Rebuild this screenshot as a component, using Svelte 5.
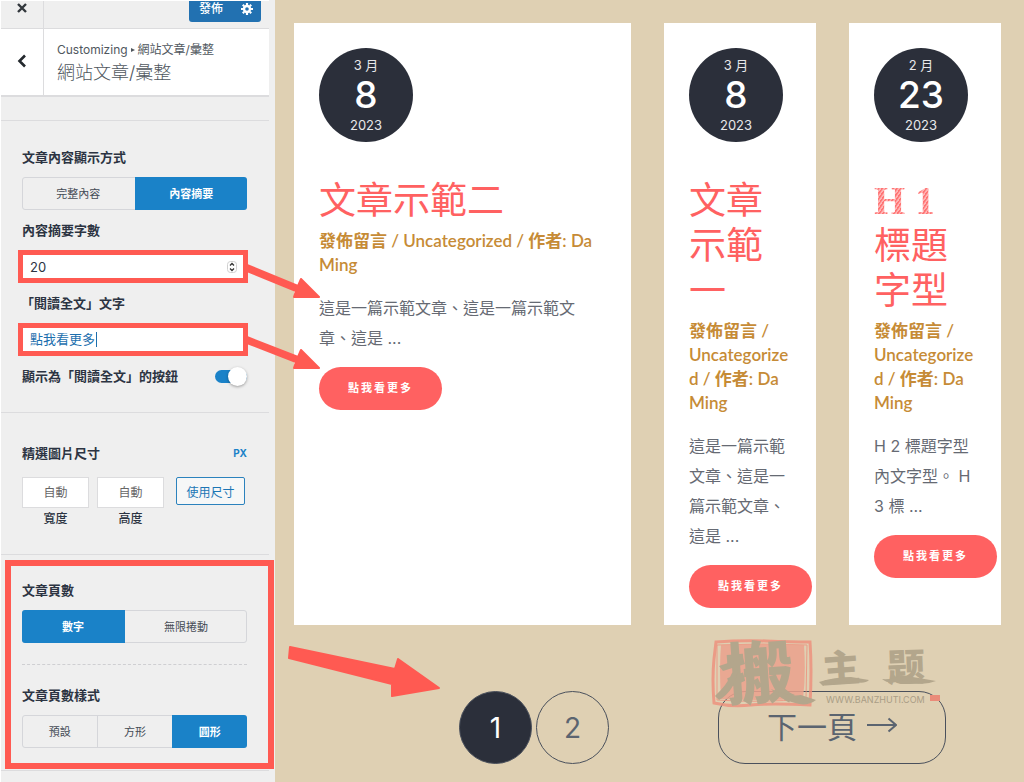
<script>
  let display = $state("內容摘要");
  let paging = $state("數字");
  let shape = $state("圓形");
  let words = $state(20);
  let more = $state("點我看更多");
  let asButton = $state(true);
  let page = $state(1);

  const posts = [
    { month: "3 月", day: "8", title: "文章示範二", wide: true, text: "這是一篇示範文章、這是一篇示範文章、這是 ..." },
    { month: "3 月", day: "8", title: "文章示範一", text: "這是一篇示範文章、這是一篇示範文章、這是 ..." },
    { month: "2 月", day: "23", sketch: "H 1", title: "標題字型", text: "H 2 標題字型內文字型。 H 3 標 ..." },
  ];
</script>

{#snippet segmented(options, value, pick, kind)}
  <div class="segmented {kind}">
    {#each options as option}
      <button type="button" class:active={option === value} onclick={() => pick(option)}>{option}</button>
    {/each}
  </div>
{/snippet}

<div class="customizer">
  <aside>
    <header>
      <button type="button" class="close" aria-label="關閉">
        <svg width="12" height="12" viewBox="0 0 12 12"><path d="M2 2l8 8M10 2l-8 8" stroke="#32373c" stroke-width="2.4" /></svg>
      </button>
      <div class="publish">
        <button type="button">發佈</button>
        <button type="button" aria-label="發佈設定">
          <svg width="12" height="12" viewBox="0 0 12 12">
            <circle cx="6" cy="6" r="3" fill="none" stroke="#fff" stroke-width="2.4" />
            <path d="M6 0v2M6 10v2M0 6h2M10 6h2M1.8 1.8l1.4 1.4M8.8 8.8l1.4 1.4M1.8 10.2l1.4-1.4M8.8 3.2l1.4-1.4" stroke="#fff" stroke-width="2.2" />
          </svg>
        </button>
      </div>
    </header>
    <div class="heading">
      <button type="button" class="back" aria-label="返回">
        <svg width="10" height="14" viewBox="0 0 10 14"><path d="M8 1.5L2.5 7 8 12.500" fill="none" stroke="#23282d" stroke-width="2.6" /></svg>
      </button>
      <div class="crumbs">
        <span>Customizing <i></i> 網站文章/彙整</span>
        <h3>網站文章/彙整</h3>
      </div>
    </div>

    <section class="first">
      <h4>文章內容顯示方式</h4>
      {@render segmented(["完整內容", "內容摘要"], display, (v) => (display = v), "half")}
      <label for="words">內容摘要字數</label>
      <div class="frame">
        <input id="words" type="number" bind:value={words} />
        <svg class="spin" width="10" height="12" viewBox="0 0 10 12">
          <rect x="0.5" y="0.5" width="9" height="11" rx="3" fill="#fff" stroke="#d0d0d0" />
          <path d="M3 4.500l2-2 2 2M3 7.500l2 2 2-2" fill="none" stroke="#333" stroke-width="1.300" />
        </svg>
      </div>
      <label for="more" class="quoted">「閱讀全文」文字</label>
      <div class="frame">
        <input id="more" class="blue" type="text" bind:value={more} />
        <span class="caret"></span>
      </div>
      <div class="row">
        <label for="as-button">顯示為「閱讀全文」的按鈕</label>
        <input id="as-button" class="toggle" type="checkbox" bind:checked={asButton} />
      </div>
    </section>

    <section class="size">
      <div class="row">
        <h4>精選圖片尺寸</h4>
        <span class="unit">PX</span>
      </div>
      <div class="dims">
        <div>
          <input id="w" type="text" placeholder="自動" />
          <label for="w">寬度</label>
        </div>
        <div>
          <input id="h" type="text" placeholder="自動" />
          <label for="h">高度</label>
        </div>
        <button type="button">使用尺寸</button>
      </div>
    </section>

    <section class="pages">
      <h4>文章頁數</h4>
      {@render segmented(["數字", "無限捲動"], paging, (v) => (paging = v), "paging")}
      <hr />
      <h4>文章頁數樣式</h4>
      {@render segmented(["預設", "方形", "圓形"], shape, (v) => (shape = v), "thirds")}
    </section>
  </aside>

  <main>
    <div class="posts">
      {#each posts as post}
        <article class:wide={post.wide}>
          <time>
            <span>{post.month}</span>
            <b>{post.day}</b>
            <span>2023</span>
          </time>
          <h2>{#if post.sketch}<span class="sketch">{post.sketch}</span>{" "}{/if}{post.title}</h2>
          <p class="meta">發佈留言 / Uncategorized / 作者: Da Ming</p>
          <p class="text">{post.text}</p>
          <a class="more" href="#post">點我看更多</a>
        </article>
      {/each}
    </div>

    <nav>
      <a href="#1" class="num" class:current={page === 1} onclick={() => (page = 1)}>1</a>
      <a href="#2" class="num" class:current={page === 2} onclick={() => (page = 2)}>2</a>
      <a href="#next" class="next">
        下一頁
        <svg width="30" height="18" viewBox="0 0 30 18"><path d="M0 9h29M21.500 2.500L29 9l-7.500 6.500" fill="none" stroke="#5b6470" stroke-width="2" /></svg>
      </a>
      <svg class="mark" width="240" height="104" viewBox="0 -16 240 104">
        <g fill="none" stroke="#ee8e7b" opacity="0.8">
          <path d="M5 3Q30 1 55 2T99 3Q101 30 99 66Q60 64 40 66T3 64Q1 40 3 20Z" stroke-width="3" />
          <path d="M6 6Q50 4 96 6L95 60Q50 64 6 61Z" stroke-width="1" />
        </g>
        <path d="M10 6Q50 4 93 6Q95 35 92 60Q50 62 10 60Q8 30 10 6Z" fill="#eba18c" opacity="0.85" />
        <g class="brush">
          <text x="15" y="59" font-size="68" transform="rotate(-4 50 36)">搬</text>
          <path d="M4 57Q16 46 21 34L27 30Q24 52 8 61ZM60 50Q78 58 90 56L105 61Q96 68 84 64Q68 60 60 50ZM8 27L32 19 34 25 12 32Z" />
          <text x="111" y="43" font-size="38" transform="rotate(-4 130 30)">主</text>
          <path d="M108 43Q124 38 140 38L158 41Q154 45 144 43Q126 42 112 47Z" />
          <text x="176" y="42" font-size="38" transform="rotate(-2 196 30)">题</text>
          <path d="M171 40Q182 41 190 36Q208 39 225 42Q215 46 204 44Q196 40 188 42Q178 46 171 40Z" />
        </g>
        <text class="url" x="115" y="64">WWW.BANZHUTI.COM</text>
        <rect x="219" y="56" width="10" height="6" fill="#ea8b79" />
      </svg>
    </nav>
  </main>

  <svg class="arrows" width="450" height="710" viewBox="0 0 450 710">
    <g fill="#ff5a52" stroke="#ff5a52" stroke-width="2" stroke-linejoin="round">
      <path d="M247 265L298 286 301 279 319 297 294 297 296 291 247 271Z" />
      <path d="M247 337L298 357 301 350 319 368 294 368 296 362 247 343Z" />
      <path d="M290 647L395 669 398 659 439 688 392 696 392 684 289 658Z" />
    </g>
  </svg>
</div>

<style>
  :global(body) {
    margin: 0;
  }
  * {
    box-sizing: border-box;
  }
  .customizer {
    position: relative;
    display: flex;
    min-height: 100vh;
    overflow: hidden;
    font-family: Inter, "Noto Sans CJK TC", sans-serif;
    color: #2c3442;
  }
  button,
  input {
    font: inherit;
    color: inherit;
    margin: 0;
    padding: 0;
    border: 0;
    background: none;
    min-width: 0;
  }
  h2,
  h3,
  h4,
  p {
    margin: 0;
  }
  a {
    text-decoration: none;
  }

  /* sidebar */
  aside {
    flex: 0 0 275px;
    padding-right: 6px;
    background: #efefef;
    border-left: 1px solid #fff;
  }
  header {
    display: flex;
    justify-content: space-between;
    align-items: flex-start;
    height: 29px;
    padding-right: 8px;
    border-top: 1px solid #fff;
    border-bottom: 1px solid #dcdcde;
  }
  .close {
    width: 43px;
    height: 27px;
    padding-bottom: 14px;
    border-right: 1px solid #dcdcde;
  }
  .close svg,
  .publish svg {
    display: block;
    margin: auto;
  }
  .publish {
    display: flex;
    width: 72px;
    height: 21px;
    background: #2271b1;
    border-radius: 0 0 3px 3px;
    color: #fff;
    font-size: 12px;
    font-weight: 500;
    line-height: 16px;
  }
  .publish button {
    flex: 1 1 28px;
    padding-bottom: 5px;
  }
  .publish button:first-child {
    flex-basis: 44px;
  }
  .heading {
    display: flex;
    height: 68px;
    background: #fff;
    border-bottom: 2px solid #dcdcde;
  }
  .back {
    width: 43px;
    border-right: 1px solid #dcdcde;
  }
  .crumbs {
    padding: 12px 0 0 13px;
    color: #50575e;
  }
  .crumbs span {
    display: flex;
    align-items: center;
    gap: 3px;
    font-size: 12px;
    line-height: 18px;
  }
  .crumbs i {
    border: solid transparent;
    border-width: 2px 0 2px 4px;
    border-left-color: #50575e;
  }
  .crumbs h3 {
    font-size: 18px;
    font-weight: 300;
    line-height: 28px;
  }
  section {
    display: flex;
    flex-direction: column;
    gap: 11px;
    padding: 27px 22px 27px 21px;
    border-top: 1px solid #dcdcde;
  }
  .first {
    margin-top: 23px;
  }
  h4,
  label {
    font-size: 13px;
    font-weight: 600;
    line-height: 18px;
  }
  .quoted {
    text-indent: -1px;
  }
  .segmented {
    display: grid;
    height: 33px;
    border: 1px solid #d5d6da;
    border-radius: 3px;
    font-size: 11px;
  }
  .half {
    grid-template-columns: 1fr 1fr;
  }
  .paging {
    grid-template-columns: 102fr 123fr;
  }
  .thirds {
    grid-template-columns: repeat(3, 1fr);
  }
  .segmented button {
    margin: -1px 0;
    padding-bottom: 2px;
    color: #444b55;
    border-left: 1px solid #d5d6da;
  }
  .segmented button:first-child {
    margin-left: -1px;
    border-left: 0;
    border-radius: 3px 0 0 3px;
  }
  .segmented button:last-child {
    margin-right: -1px;
    border-radius: 0 3px 3px 0;
  }
  .segmented .active {
    background: #1a82c8;
    border-color: #1a82c8;
    color: #fff;
    font-weight: 600;
  }
  .segmented .active + button {
    border-color: #1a82c8;
  }
  .frame {
    position: relative;
    display: flex;
    height: 33px;
    margin: 0 -1px 0 -4px;
    border: 5px solid #ff5a52;
    background: #fff;
  }
  .frame input {
    width: 100%;
    padding: 0 7px;
    font-size: 13px;
    outline: 0;
    appearance: textfield;
  }
  .frame input::-webkit-inner-spin-button {
    appearance: none;
  }
  .frame .blue {
    padding-bottom: 2px;
    color: #1c6fae;
  }
  .spin {
    position: absolute;
    right: 6px;
    top: 6px;
  }
  .caret {
    position: absolute;
    left: 73px;
    top: 4px;
    width: 1px;
    height: 15px;
    background: #1c6fae;
  }
  .row {
    display: flex;
    justify-content: space-between;
    align-items: center;
  }
  .toggle {
    appearance: none;
    display: flex;
    align-items: center;
    width: 32px;
    height: 13px;
    border-radius: 7px;
    background: #a7aaad;
  }
  .toggle::before {
    content: "";
    width: 19px;
    height: 19px;
    border-radius: 50%;
    background: #fff;
    box-shadow: 0 1px 3px rgb(0 0 0 / 35%);
  }
  .toggle:checked {
    justify-content: flex-end;
    background: #1a82c8;
  }
  .size {
    gap: 15px;
    padding-top: 31px;
    padding-bottom: 26px;
  }
  .unit {
    font-size: 10px;
    font-weight: 700;
    color: #1a82c8;
  }
  .dims {
    display: grid;
    grid-template-columns: 67px 67px 1fr;
    gap: 8px;
    align-items: start;
    text-align: center;
  }
  .dims input {
    width: 100%;
    height: 31px;
    background: #fff;
    border: 1px solid #dcdcde;
    font-size: 12px;
    text-align: center;
  }
  .dims input::placeholder {
    color: #666;
  }
  .dims label {
    display: block;
    padding-top: 2px;
    font-size: 12px;
    font-weight: 500;
  }
  .dims button {
    height: 28px;
    margin: 0 2px 0 4px;
    border: 1px solid #2b82bd;
    border-radius: 2px;
    background: #f6f7f7;
    color: #1c76b5;
    font-size: 12px;
    white-space: nowrap;
  }
  .pages {
    position: relative;
    padding: 26px 22px 22px 21px;
    border-bottom: 1px solid #dcdcde;
  }
  .pages::after {
    content: "";
    position: absolute;
    inset: 5px -5px 1px 4px;
    border: 6px solid #ff5a52;
    pointer-events: none;
  }
  .pages hr {
    width: 100%;
    margin: 10px 0;
    border: 0;
    border-top: 1px dashed #cfcfd2;
  }

  /* preview */
  main {
    flex: 1;
    min-width: 0;
    padding: 23px 23px 18px 19px;
    background: #dfd0b3;
  }
  .posts {
    display: grid;
    grid-template-columns: repeat(4, minmax(0, 1fr));
    gap: 33px;
  }
  article {
    padding: 25px 25px 17px;
    background: #fff;
  }
  .wide {
    grid-column: span 2;
  }
  time {
    display: flex;
    flex-direction: column;
    align-items: center;
    justify-content: center;
    width: 94px;
    height: 94px;
    margin-bottom: 36px;
    border-radius: 50%;
    background: #2b2f3a;
    color: #e8e8ea;
    font-size: 13px;
    line-height: 18px;
  }
  time b {
    color: #fff;
    font-size: 37px;
    font-weight: 500;
    line-height: 42px;
  }
  h2 {
    color: #ff6161;
    font-size: 37px;
    font-weight: 400;
    line-height: 45px;
  }
  .sketch {
    display: inline-block;
    height: 45px;
    vertical-align: top;
    font-family: "Liberation Serif", serif;
    font-size: 40px;
    font-weight: 700;
    color: transparent;
    background: repeating-linear-gradient(125deg, #ff7474 0 1px, #ffb4b4 2px 3px);
    background-clip: text;
  }
  .meta {
    margin-top: 6px;
    color: #c68b36;
    font-family: Lato, "Noto Sans CJK TC", sans-serif;
    font-size: 17px;
    font-weight: 600;
    line-height: 24px;
    overflow-wrap: anywhere;
  }
  .text {
    margin: 16px 0 14px;
    color: #666a73;
    font-size: 16px;
    line-height: 30px;
  }
  .more {
    display: flex;
    align-items: center;
    justify-content: center;
    width: 123px;
    height: 43px;
    padding-bottom: 3px;
    border-radius: 22px;
    background: #ff6161;
    color: #fff;
    font-size: 11px;
    font-weight: 600;
    letter-spacing: 2px;
  }
  nav {
    position: relative;
    display: flex;
    justify-content: flex-end;
    gap: 4px;
    margin-top: 66px;
    padding-right: 55px;
    font-size: 28px;
  }
  nav a {
    display: flex;
    align-items: center;
    justify-content: center;
    height: 73px;
    border: 1px solid #4a505c;
    color: #5b6470;
  }
  .num {
    width: 73px;
    border-radius: 50%;
  }
  .current {
    background: #2b2f3a;
    color: #fff;
  }
  .next {
    gap: 10px;
    width: 228px;
    margin-left: 105px;
    padding-bottom: 6px;
    border-radius: 27px;
    font-size: 30px;
  }
  .mark {
    position: absolute;
    right: 50px;
    top: -68px;
    overflow: visible;
    pointer-events: none;
  }
  .brush {
    font-family: "Noto Sans CJK SC", sans-serif;
    font-weight: 900;
    fill: #b3a68c;
  }
  .url {
    font-size: 9px;
    fill: #a99d86;
  }
  .arrows {
    position: absolute;
    left: 0;
    top: 0;
    pointer-events: none;
  }
</style>
